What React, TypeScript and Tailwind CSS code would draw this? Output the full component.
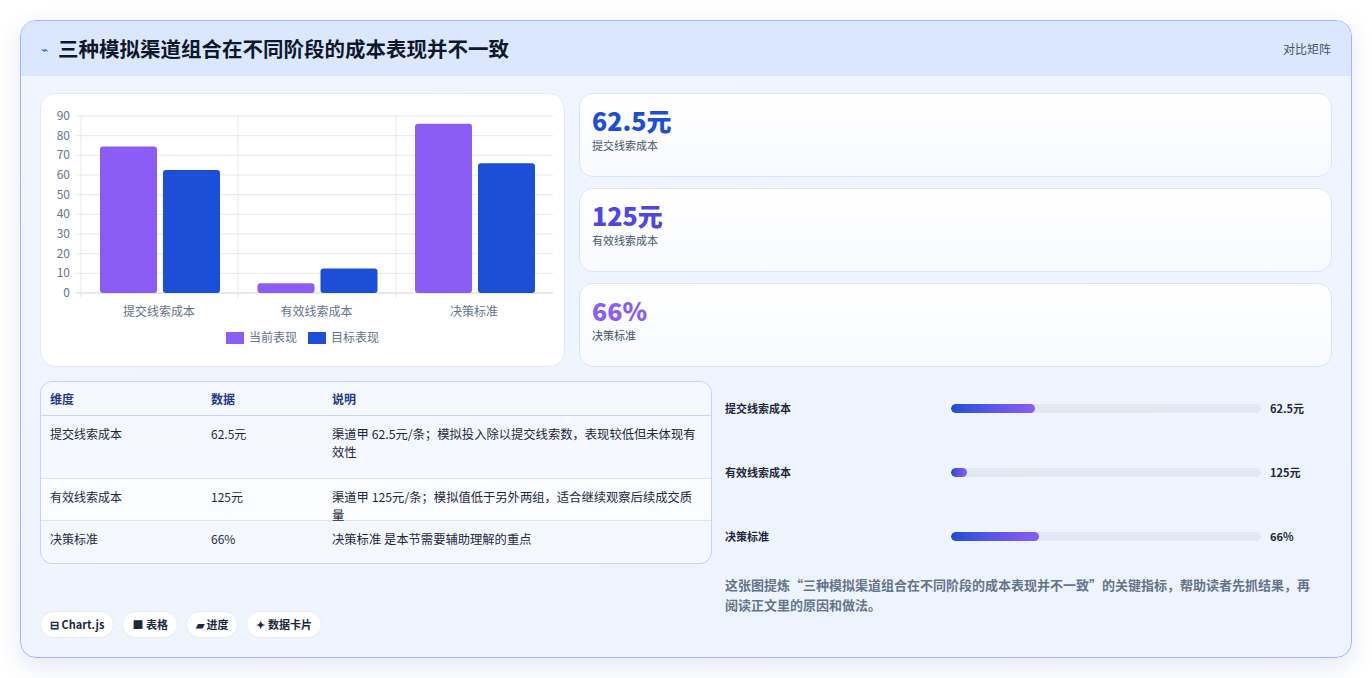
import React from 'react';

const font = { fontFamily: '"Noto Sans CJK SC", "Noto Sans", sans-serif' };

const purple = [74.5, 5, 86];
const blue = [62.5, 12.5, 66];
const cats = ['提交线索成本', '有效线索成本', '决策标准'];

function Chart() {
    const y0 = 292;
    const k = 177 / 90;
    return (
        <svg width="524" height="273" viewBox="40 93 524 273" className="block">
            {[0, 10, 20, 30, 40, 50, 60, 70, 80, 90].map((v) => {
                const y = y0 - v * k;
                return (
                    <g key={v}>
                        <line x1="75" x2="552" y1={y} y2={y} stroke={v === 0 ? '#cbd5e1' : '#e5e7eb'} strokeWidth="1" />
                        <text x="69" y={y + 4} textAnchor="end" fontSize="12" fill="#64748b">{v}</text>
                    </g>
                );
            })}
            {[80, 237, 395].map((x) => (
                <line key={x} x1={x} x2={x} y1="115" y2="298" stroke="#e5e7eb" />
            ))}
            {cats.map((c, i) => {
                const bx = 80 + i * 157.5;
                return (
                    <g key={c}>
                        <rect x={bx + 19} y={y0 - purple[i] * k} width="57" height={purple[i] * k} rx="3" fill="#8b5cf6" />
                        <rect x={bx + 82} y={y0 - blue[i] * k} width="57" height={blue[i] * k} rx="3" fill="#1d4ed8" />
                        <text x={bx + 78} y="315" textAnchor="middle" fontSize="12" fill="#64748b">{c}</text>
                    </g>
                );
            })}
            <rect x="225" y="331" width="18" height="12" fill="#8b5cf6" />
            <text x="248" y="341" fontSize="12" fill="#64748b">当前表现</text>
            <rect x="307" y="331" width="18" height="12" fill="#1d4ed8" />
            <text x="330" y="341" fontSize="12" fill="#64748b">目标表现</text>
        </svg>
    );
}

const kpis = [
    { v: '62.5元', l: '提交线索成本', c: 'text-[#1d4ed8]' },
    { v: '125元', l: '有效线索成本', c: 'text-[#4f46e5]' },
    { v: '66%', l: '决策标准', c: 'text-[#8b5cf6]' },
];

const rows = [
    { d: '提交线索成本', n: '62.5元', s: '渠道甲 62.5元/条；模拟投入除以提交线索数，表现较低但未体现有效性', h: 'h-[63px]' },
    { d: '有效线索成本', n: '125元', s: '渠道甲 125元/条；模拟值低于另外两组，适合继续观察后续成交质量', h: 'h-[42px]' },
    { d: '决策标准', n: '66%', s: '决策标准 是本节需要辅助理解的重点', h: 'h-[42px]' },
];

const bars = [
    { l: '提交线索成本', v: '62.5元', w: 27 },
    { l: '有效线索成本', v: '125元', w: 5 },
    { l: '决策标准', v: '66%', w: 28.5 },
];

export default function App() {
    return (
        <div className="w-[1372px] h-[678px] bg-white p-[20px]" style={font}>
            <div className="w-[1332px] h-[638px] rounded-[16px] border border-[#a5b4fc] bg-gradient-to-br from-[#f0f5ff] to-[#eef4ff] shadow-[0_8px_24px_rgba(30,64,175,0.12)] overflow-hidden flex flex-col">
                <div className="h-[55px] bg-[#dbe7fe] flex items-center justify-between px-[20px] shrink-0">
                    <div className="flex items-center gap-[10px]">
                        <span className="text-[#2563eb] text-[12px]">⌁</span>
                        <h1 className="text-[20.5px] font-bold text-[#0f172a]">三种模拟渠道组合在不同阶段的成本表现并不一致</h1>
                    </div>
                    <span className="text-[12px] text-[#475569]">对比矩阵</span>
                </div>
                <div className="flex-1 px-[19px] pt-[17px] flex flex-col">
                    <div className="flex gap-[14px]">
                        <div className="w-[525px] h-[274px] bg-white rounded-[16px] border border-[#e0e7ff] overflow-hidden">
                            <Chart />
                        </div>
                        <div className="flex-1 flex flex-col gap-[11px]">
                            {kpis.map((k) => (
                                <div key={k.l} className="h-[84px] rounded-[14px] border border-[#dbe4fb] bg-gradient-to-b from-white to-[#f8faff] px-[12px] pt-[10px]">
                                    <div className={`text-[25px] font-extrabold leading-[32px] ${k.c}`}>{k.v}</div>
                                    <div className="text-[11px] text-[#475569] mt-[1px]">{k.l}</div>
                                </div>
                            ))}
                        </div>
                    </div>
                    <div className="flex mt-[14px]">
                        <div className="w-[672px]">
                            <div className="rounded-[12px] border border-[#c7d2fe] bg-[#f5f8ff] overflow-hidden text-[12px]">
                                <div className="flex h-[34px] items-center border-b border-[#c7d2fe] text-[#1e3a8a] font-semibold">
                                    <div className="w-[170px] pl-[9px]">维度</div>
                                    <div className="w-[121px]">数据</div>
                                    <div className="flex-1">说明</div>
                                </div>
                                {rows.map((r, i) => (
                                    <div key={r.d} className={`flex ${r.h} pt-[9px] ${i === 1 ? 'bg-[#fafcff]' : ''} ${i < 2 ? 'border-b border-[#dbe4f5]' : ''} text-[#1e293b]`}>
                                        <div className="w-[170px] pl-[9px]">{r.d}</div>
                                        <div className="w-[121px]">{r.n}</div>
                                        <div className="flex-1 pr-[8px] leading-[18px] text-[12.3px]">{r.s}</div>
                                    </div>
                                ))}
                            </div>
                            <div className="flex gap-[8px] mt-[47px]">
                                {['⊟ Chart.js', '■ 表格', '▰ 进度', '✦ 数据卡片'].map((c) => (
                                    <span key={c} className="h-[27px] px-[9px] rounded-full bg-white border border-[#e5eaf5] flex items-center text-[11px] font-semibold text-[#1e293b]">{c}</span>
                                ))}
                            </div>
                        </div>
                        <div className="flex-1 pl-[13px] pt-[17px]">
                            {bars.map((b) => (
                                <div key={b.l} className="flex items-center h-[20px] mb-[44px]">
                                    <div className="w-[226px] text-[11px] font-semibold text-[#1e293b]">{b.l}</div>
                                    <div className="w-[310px] h-[9px] rounded-full bg-[#e2e8f0] overflow-hidden">
                                        <div className="h-full rounded-full bg-gradient-to-r from-[#1d4ed8] to-[#8b5cf6]" style={{ width: `${b.w}%` }} />
                                    </div>
                                    <div className="ml-[9px] text-[11px] font-bold text-[#1e293b]">{b.v}</div>
                                </div>
                            ))}
                            <p className="-mt-[15px] text-[13px] font-semibold leading-[20px] text-[#64748b] w-[592px]">
                                这张图提炼“三种模拟渠道组合在不同阶段的成本表现并不一致”的关键指标，帮助读者先抓结果，再阅读正文里的原因和做法。
                            </p>
                        </div>
                    </div>
                </div>
            </div>
        </div>
    );
}
